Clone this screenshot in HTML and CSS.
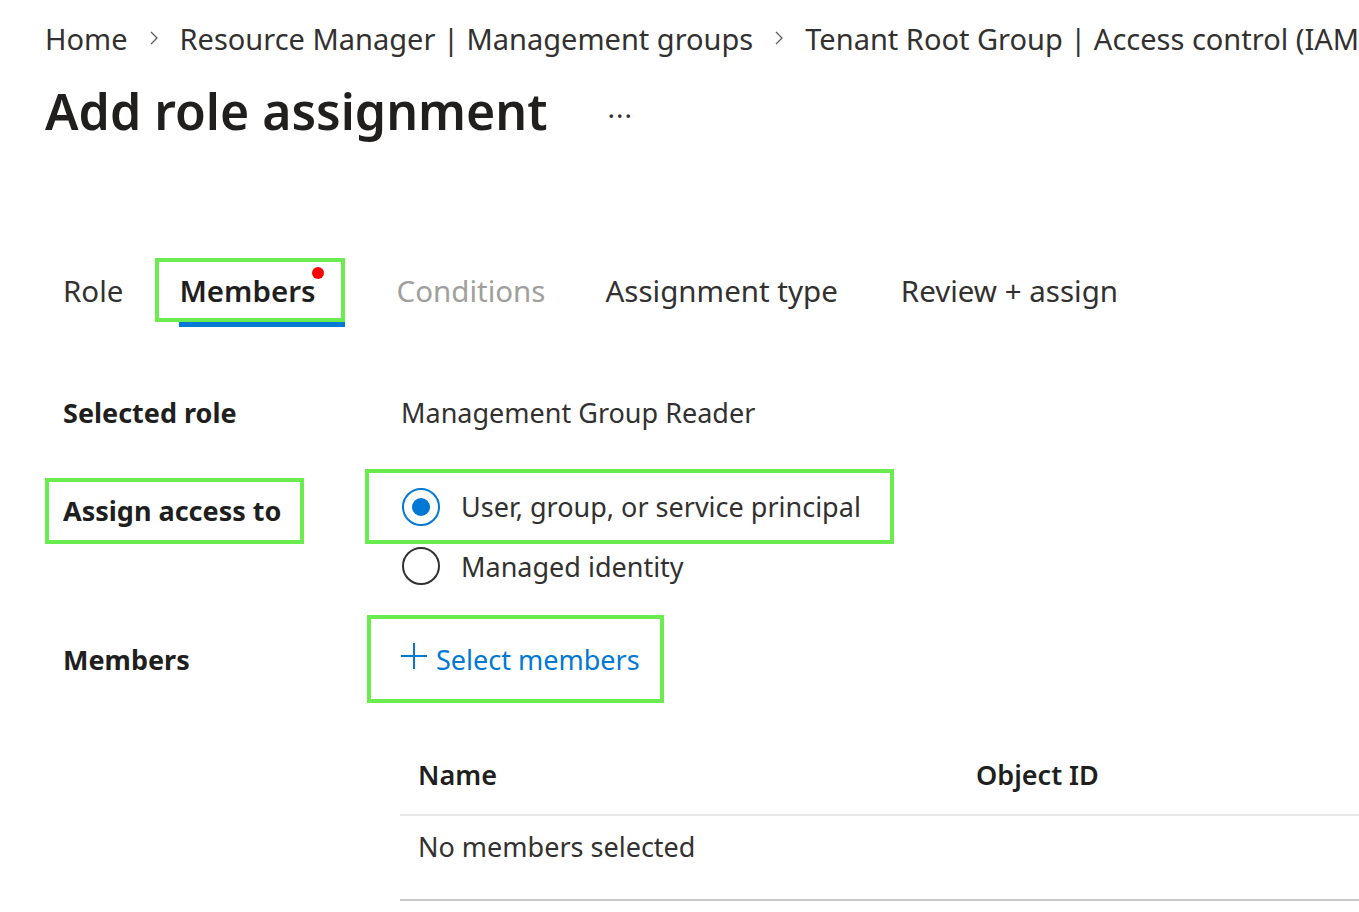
FILE: index.html
```html
<!DOCTYPE html>
<html lang="en">
<head>
    <meta charset="UTF-8">
    <title>Add role assignment</title>
    <link rel="stylesheet" href="styles.css">
</head>
<body>
    <nav class="breadcrumb">
        <span>Home</span>
        <svg class="chev" viewBox="0 0 10 16"><path d="M2 2l6 6-6 6" fill="none" stroke="#605e5c" stroke-width="1.3"/></svg>
        <span>Resource Manager | Management groups</span>
        <svg class="chev" viewBox="0 0 10 16"><path d="M2 2l6 6-6 6" fill="none" stroke="#605e5c" stroke-width="1.3"/></svg>
        <span>Tenant Root Group | Access control (IAM)</span>
    </nav>

    <div class="title-row">
        <h1>Add role assignment</h1>
        <span class="more">&middot;&middot;&middot;</span>
    </div>

    <div class="tabs">
        <span class="tab">Role</span>
        <span class="tab active highlight">Members<i class="dot"></i></span>
        <span class="tab disabled">Conditions</span>
        <span class="tab wide">Assignment type</span>
        <span class="tab">Review + assign</span>
    </div>

    <div class="form">
        <div class="row row-role">
            <div class="label">Selected role</div>
            <div class="value">Management Group Reader</div>
        </div>

        <div class="row row-access">
            <div class="label-cell"><span class="label highlight access-label">Assign access to</span></div>
            <div class="options">
                <div class="highlight option-box">
                    <span class="radio checked"></span>
                    <span>User, group, or service principal</span>
                </div>
                <div class="option">
                    <span class="radio"></span>
                    <span>Managed identity</span>
                </div>
            </div>
        </div>

        <div class="row row-members">
            <div class="label">Members</div>
            <div class="highlight select-box">
                <svg class="plus" viewBox="0 0 26 26"><path d="M13 0v26M0 13h26" stroke="#0078d4" stroke-width="2"/></svg>
                <span class="link">Select members</span>
            </div>
        </div>

        <div class="table">
            <div class="thead">
                <span class="col-name">Name</span>
                <span class="col-id">Object ID</span>
            </div>
            <div class="tbody">
                <span class="col-name">No members selected</span>
            </div>
        </div>
    </div>
</body>
</html>
```

FILE: styles.css
```css
body {
    margin: 0;
    padding: 0 0 0 45px;
    font-family: 'Noto Sans', 'Open Sans', sans-serif;
    color: #323130;
    background: #fff;
    overflow: hidden;
    white-space: nowrap;
}
.highlight {
    border: 4px solid #6aeb4e;
    box-sizing: border-box;
}
.breadcrumb {
    display: flex;
    align-items: center;
    gap: 21px;
    height: 76px;
    font-size: 29px;
    color: #323130;
}
.chev {
    flex: none;
    width: 10px;
    height: 16px;
}
.title-row {
    display: flex;
    align-items: center;
    height: 70px;
}
h1 {
    margin: 0;
    font-size: 50px;
    font-weight: 600;
    color: #201f1e;
}
.more {
    margin-left: 60px;
    margin-top: 8px;
    font-size: 28px;
    color: #323130;
    letter-spacing: 1px;
}
.tabs {
    display: flex;
    align-items: center;
    margin-top: 112px;
    padding-left: 18px;
    height: 64px;
    font-size: 29.5px;
}
.tab {
    margin-right: 60px;
}
.tab.wide {
    margin-right: 63px;
}
.tab.active {
    position: relative;
    margin-left: -28px;
    margin-right: 52px;
    padding: 0 25px 0 20px;
    height: 64px;
    line-height: 58px;
    font-weight: 600;
    color: #201f1e;
}
.tab.active::after {
    content: "";
    position: absolute;
    left: 20px;
    right: -4px;
    bottom: -9px;
    height: 5px;
    background: #0078d4;
}
.dot {
    position: absolute;
    top: 5px;
    right: 17px;
    width: 12px;
    height: 12px;
    border-radius: 50%;
    background: #f00;
}
.tab.disabled {
    color: #a19f9d;
}
.form {
    padding-left: 18px;
    margin-top: 61px;
    font-size: 27px;
}
.row {
    display: grid;
    grid-template-columns: 338px 1fr;
    align-items: center;
}
.label {
    font-weight: 700;
    color: #201f1e;
}
.row-role {
    height: 58px;
}
.row-access {
    align-items: start;
    margin-top: 28px;
}
.label-cell {
    margin-left: -18px;
    padding-top: 9px;
}
.access-label {
    display: inline-block;
    width: 259px;
    height: 66px;
    line-height: 58px;
    padding-left: 14px;
}
.options {
    margin-left: -36px;
}
.option-box, .option {
    display: flex;
    align-items: center;
    gap: 21px;
    padding-left: 33px;
}
.option-box {
    width: 529px;
    height: 75px;
}
.option {
    height: 44px;
    padding-left: 37px;
}
.radio {
    flex: none;
    width: 38px;
    height: 38px;
    border: 2px solid #323130;
    border-radius: 50%;
    box-sizing: border-box;
    position: relative;
}
.radio.checked {
    border-color: #0078d4;
}
.radio.checked::after {
    content: "";
    position: absolute;
    left: 8px;
    top: 8px;
    width: 18px;
    height: 18px;
    border-radius: 50%;
    background: #0078d4;
}
.row-members {
    margin-top: 27px;
}
.select-box {
    display: flex;
    align-items: center;
    gap: 9px;
    margin-left: -34px;
    width: 297px;
    height: 88px;
    padding-left: 30px;
}
.plus {
    width: 26px;
    height: 26px;
    margin-top: -6px;
}
.link {
    color: #0078d4;
}
.table {
    margin-left: 337px;
    margin-top: 31px;
}
.thead, .tbody {
    display: flex;
    padding-left: 18px;
}
.thead {
    height: 80px;
    align-items: center;
    font-weight: 600;
    color: #201f1e;
    border-bottom: 2px solid #e8e8e8;
}
.tbody {
    height: 85px;
    padding-top: 12px;
    box-sizing: border-box;
    border-bottom: 2px solid #c8c8c8;
}
.col-name {
    width: 558px;
}
```
